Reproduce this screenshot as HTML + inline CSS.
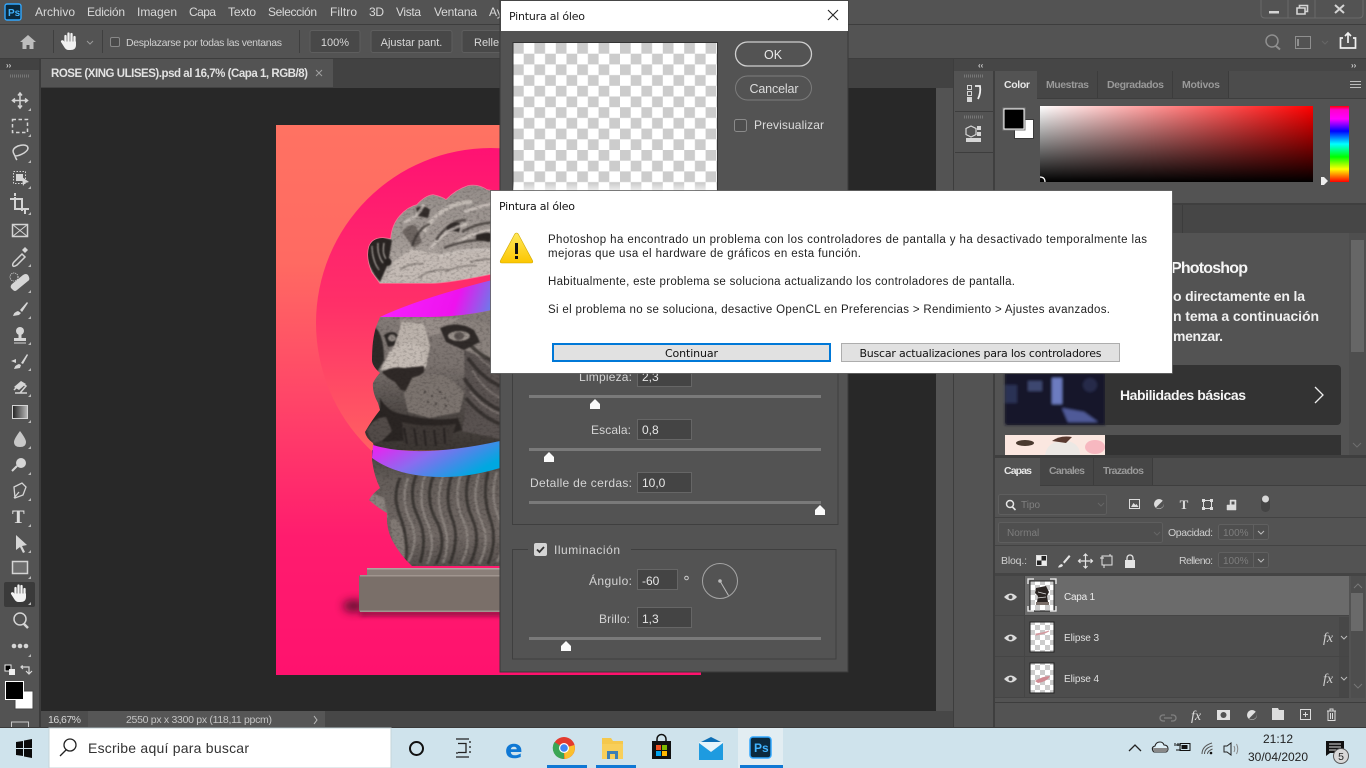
<!DOCTYPE html>
<html><head><meta charset="utf-8"><title>Photoshop</title>
<style>
html,body{margin:0;padding:0;width:1366px;height:768px;overflow:hidden;background:#535353}
svg{display:block;position:absolute;left:0;top:0}
text{font-family:"Liberation Sans",sans-serif;white-space:pre}
.d{font-family:"DejaVu Sans",sans-serif}
</style></head><body>
<svg width="1366" height="768" viewBox="0 0 1366 768" xmlns="http://www.w3.org/2000/svg">
<defs>
<pattern id="ck" width="21.4" height="21.4" patternUnits="userSpaceOnUse" x="513" y="43"><rect width="21.4" height="21.4" fill="#fff"/><rect width="10.7" height="10.7" fill="#ccc"/><rect x="10.7" y="10.7" width="10.7" height="10.7" fill="#ccc"/></pattern>
<pattern id="cs" width="10" height="10" patternUnits="userSpaceOnUse"><rect width="10" height="10" fill="#fff"/><rect width="5" height="5" fill="#ccc"/><rect x="5" y="5" width="5" height="5" fill="#ccc"/></pattern>
<linearGradient id="bg" x1="0" y1="0" x2="0" y2="1"><stop offset="0" stop-color="#ff7262"/><stop offset=".25" stop-color="#ff6a62"/><stop offset=".5" stop-color="#ff4568"/><stop offset=".75" stop-color="#ff1c6e"/><stop offset="1" stop-color="#ff126e"/></linearGradient>
<linearGradient id="circ" x1="0" y1="0" x2="0" y2="1"><stop offset="0" stop-color="#ff1273"/><stop offset=".45" stop-color="#ff3068"/><stop offset="1" stop-color="#ff7060"/></linearGradient>
<linearGradient id="rib1" gradientUnits="userSpaceOnUse" x1="400" y1="285" x2="500" y2="320"><stop offset="0" stop-color="#f51ffb"/><stop offset=".55" stop-color="#ee12ee"/><stop offset="1" stop-color="#3f9fe8"/></linearGradient>
<linearGradient id="rib2" x1="0" y1="0" x2="1" y2=".5"><stop offset="0" stop-color="#ff12f0"/><stop offset=".5" stop-color="#8a6cf0"/><stop offset="1" stop-color="#00a8e0"/></linearGradient>
<linearGradient id="top" x1="0" y1="0" x2="0" y2="1"><stop offset="0" stop-color="#938c88"/><stop offset=".6" stop-color="#a39b96"/><stop offset="1" stop-color="#c2bab4"/></linearGradient>
<linearGradient id="head" x1="0" y1="0" x2="0" y2="1"><stop offset="0" stop-color="#857d79"/><stop offset=".4" stop-color="#7a726e"/><stop offset=".7" stop-color="#4f4946"/><stop offset="1" stop-color="#38332f"/></linearGradient>
<linearGradient id="mane" x1="0" y1="0" x2="0" y2="1"><stop offset="0" stop-color="#46413e"/><stop offset=".25" stop-color="#645d59"/><stop offset=".7" stop-color="#706864"/><stop offset="1" stop-color="#524c49"/></linearGradient>
<linearGradient id="sv" x1="0" y1="0" x2="1" y2="0"><stop offset="0" stop-color="#fff"/><stop offset="1" stop-color="#f00"/></linearGradient>
<linearGradient id="sk" x1="0" y1="0" x2="0" y2="1"><stop offset="0" stop-color="#000" stop-opacity="0"/><stop offset="1" stop-color="#000"/></linearGradient>
<linearGradient id="hue" x1="0" y1="0" x2="0" y2="1"><stop offset="0" stop-color="#f00"/><stop offset=".05" stop-color="#f0c"/><stop offset=".17" stop-color="#f0f"/><stop offset=".33" stop-color="#00f"/><stop offset=".5" stop-color="#0ff"/><stop offset=".67" stop-color="#0f0"/><stop offset=".83" stop-color="#ff0"/><stop offset="1" stop-color="#f00"/></linearGradient>
<linearGradient id="gt" x1="0" y1="0" x2="1" y2="0"><stop offset="0" stop-color="#222"/><stop offset="1" stop-color="#bbb"/></linearGradient>
<linearGradient id="fade" x1="0" y1="0" x2="0" y2="1"><stop offset="0" stop-color="#fff" stop-opacity="0"/><stop offset="1" stop-color="#fff" stop-opacity=".7"/></linearGradient>
<linearGradient id="warn" x1="0" y1="0" x2="0" y2="1"><stop offset="0" stop-color="#ffe85a"/><stop offset="1" stop-color="#fcc600"/></linearGradient>
<filter id="bl4" filterUnits="userSpaceOnUse" x="270" y="560" width="300" height="100"><feGaussianBlur stdDeviation="4.500"/></filter>
<filter id="bl2" filterUnits="userSpaceOnUse" x="340" y="590" width="240" height="50"><feGaussianBlur stdDeviation="2.500"/></filter>
<filter id="soft" filterUnits="userSpaceOnUse" x="990" y="360" width="130" height="100"><feGaussianBlur stdDeviation="1.200"/></filter>
<filter id="tex" filterUnits="userSpaceOnUse" x="340" y="170" width="180" height="420" color-interpolation-filters="sRGB">
<feGaussianBlur in="SourceGraphic" stdDeviation=".9" result="b"/>
<feTurbulence type="fractalNoise" baseFrequency=".3 .45" numOctaves="2" seed="4" result="n"/>
<feColorMatrix in="n" type="matrix" values="0 0 0 0 .1  0 0 0 0 .08  0 0 0 0 .08  .55 0 0 0 -.25" result="d"/>
<feComposite in="d" in2="SourceAlpha" operator="in" result="dd"/>
<feMerge><feMergeNode in="b"/><feMergeNode in="dd"/></feMerge>
</filter>
<clipPath id="topClip"><path d="M380 283L372 272Q366 258 369 247Q372 238 383 238L391 239Q392 225 400 216Q408 207 417 205Q425 196 433 195Q442 197 446 200Q456 190 468 186Q478 184 487 190L500 192V272Q450 283 430 283Z"/></clipPath>
<clipPath id="headClip"><path id="headOutline" d="M380 317L430 317Q470 316 500 308V450H375L373 443Q366 438 365 432Q372 420 380 410L378 403Q372 392 373 383Q376 377 380 373Q372 366 372 360Q372 340 376 327Z"/></clipPath>
<clipPath id="maneClip"><path d="M372 460Q374 476 380 488Q372 494 369 500Q378 508 387 513Q386 528 392 540Q400 555 412 566H505V450H372Z"/></clipPath>
<g id="hand"><path d="M-4.500 0v-6M-1.500 0v-8.500M1.500 0v-8M4.500 1v-6" fill="none" stroke="currentColor" stroke-width="2.300" stroke-linecap="round"/><path d="M-6 -.5h12v3.500q0 5-5.500 5h-2q-2.500 0-4-2.500l-3.500-5.500q-.5-1.500 1-1.800 1-.2 2 .8z" fill="currentColor"/></g>
</defs>

<!-- chrome -->
<rect width="1366" height="768" fill="#535353"/>
<rect y="24" width="1366" height="1" fill="#3d3d3d"/>
<rect y="58" width="1366" height="1" fill="#3d3d3d"/>

<!-- menu -->
<g font-size="12" fill="#d9d9d9">
<rect x="5" y="4" width="16" height="16" rx="2" fill="#0b2a3e" stroke="#31a8ff" stroke-width="1.400"/>
<text x="8" y="16" font-size="10" fill="#41b4ff" font-weight="bold">Ps</text>
<text x="35" y="16" textLength="40">Archivo</text><text x="87" y="16" textLength="38">Edición</text><text x="137" y="16" textLength="40">Imagen</text><text x="189" y="16" textLength="27">Capa</text><text x="228" y="16" textLength="28">Texto</text><text x="268" y="16" textLength="49">Selección</text><text x="330" y="16" textLength="27">Filtro</text><text x="369" y="16" textLength="15">3D</text><text x="396" y="16" textLength="25">Vista</text><text x="434" y="16" textLength="43">Ventana</text><text x="489" y="16">Ay</text>
</g>
<!-- window buttons -->
<path d="M1261 0v14q0 4 4 4h94q4 0 4-4V0M1288 0v18M1315 0v18" fill="none" stroke="#6a6a6a"/>
<rect x="1269" y="11" width="10" height="2.500" fill="#d4d4d4"/>
<path d="M1297 8h8v6h-8zM1299.500 8V5.500h8v6h-2.500" fill="none" stroke="#d4d4d4" stroke-width="1.600"/>
<path d="M1335 5l9 8M1344 5l-9 8" stroke="#d4d4d4" stroke-width="2"/>

<!-- options bar -->
<path d="M28 35l-8 7h2.500v7h4v-4h3v4h4v-7H36z" fill="#bdbdbd"/>
<rect x="53" y="30" width="1" height="23" fill="#3f3f3f"/><rect x="102" y="30" width="1" height="23" fill="#3f3f3f"/><rect x="299" y="30" width="1" height="23" fill="#3f3f3f"/>
<use href="#hand" x="70" y="42" color="#f0f0f0"/>
<path d="M87 41l3 3 3-3" fill="none" stroke="#9a9a9a"/>
<rect x="110.500" y="37.500" width="9" height="9" rx="1.500" fill="#4a4a4a" stroke="#888"/>
<text x="126" y="46" font-size="10.500" fill="#d0d0d0" textLength="156">Desplazarse por todas las ventanas</text>
<rect x="310" y="30.500" width="50" height="22" rx="2" fill="#484848" stroke="#5e5e5e"/>
<text x="335" y="46" font-size="11" fill="#d8d8d8" text-anchor="middle">100%</text>
<rect x="371" y="30.500" width="81" height="22" rx="2" fill="#484848" stroke="#5e5e5e"/>
<text x="411.500" y="46" font-size="11" fill="#d8d8d8" text-anchor="middle">Ajustar pant.</text>
<rect x="462" y="30.500" width="60" height="22" rx="2" fill="#484848" stroke="#5e5e5e"/>
<text x="474" y="46" font-size="11" fill="#d8d8d8">Rellen</text>
<circle cx="1272" cy="41" r="6" fill="none" stroke="#8f8f8f" stroke-width="1.500"/><path d="M1276 46l4 3.500" stroke="#8f8f8f" stroke-width="2"/>
<rect x="1295.500" y="36.500" width="15" height="12" fill="none" stroke="#8f8f8f"/><path d="M1298 39v7" stroke="#8f8f8f" stroke-width="2"/>
<path d="M1322 41l3 3 3-3" fill="none" stroke="#666"/>
<path d="M1343 38h-2.500v10h15V38H1353M1348 43V33M1345 36l3-3 3 3" fill="none" stroke="#f0f0f0" stroke-width="1.700"/>

<!-- tab strip -->
<rect x="41" y="59" width="913" height="29" fill="#424242"/>
<rect x="41" y="59" width="292" height="28" fill="#535353"/>
<text x="51" y="77" font-size="11.500" fill="#e2e2e2" font-weight="bold" textLength="257">ROSE (XING ULISES).psd al 16,7% (Capa 1, RGB/8)</text>
<path d="M316 70l6 6M322 70l-6 6" stroke="#a0a0a0"/>

<!-- left tool strip -->
<rect x="0" y="59" width="39" height="11" fill="#424242"/>
<rect x="39" y="59" width="2" height="670" fill="#3c3c3c"/>
<text x="6" y="68" font-size="8" fill="#d0d0d0" font-weight="bold">››</text>
<path d="M10 76h19" stroke="#777" stroke-width="3" stroke-dasharray="1 1"/>

<!-- canvas -->
<rect x="41" y="88" width="896" height="623" fill="#282828"/>
<rect x="936" y="88" width="18" height="623" fill="#535353"/>
<rect x="953" y="59" width="1" height="670" fill="#3d3d3d"/>

<!-- artwork -->
<rect x="276" y="125" width="425" height="550" fill="url(#bg)"/>
<circle cx="491" cy="323" r="175" fill="url(#circ)"/>
<ellipse cx="354" cy="606" rx="11" ry="6" fill="#3a1020" opacity=".8" filter="url(#bl4)"/>
<rect x="360" y="611" width="200" height="5" fill="#8d1040" filter="url(#bl2)"/>
<!-- base -->
<path d="M367 568h140v8H367z" fill="#8a7f79"/>
<rect x="367" y="568" width="140" height="1.500" fill="#b0a59f"/>
<path d="M361 575h146v37H361q-2 0-2-2v-33q0-2 2-2z" fill="#7a6f69"/>
<rect x="360" y="575" width="147" height="1.500" fill="#a0958f"/>
<rect x="360" y="610.500" width="147" height="1.500" fill="#a0958f"/>
<!-- mane -->
<g clip-path="url(#maneClip)"><g filter="url(#tex)">
<rect x="360" y="450" width="150" height="120" fill="url(#mane)"/>
<path d="M366 490l18 8 4 20-14 0z" fill="#8a827d"/>
<path d="M390 520q12-8 18 40l-14-8z" fill="#817974"/>
<g fill="none" stroke="#2a2624" stroke-width="3" opacity=".7">
<path d="M400 478q-8 18 0 38t6 45M416 475q-8 22 2 42t2 46M434 474q-10 24 2 46t0 44M452 474q-8 24 0 44t-2 46M470 472q-8 24 2 46t-2 46M488 472q-6 24 2 46t-2 46"/>
</g>
<g fill="none" stroke="#a39b95" stroke-width="2.500" opacity=".55">
<path d="M408 478q-8 22 2 42t-2 42M425 476q-8 24 2 46t0 42M443 475q-8 24 0 46t0 42M461 474q-8 24 2 46t-2 44M479 474q-8 24 2 46t-2 44M497 472q-8 24 2 46t-2 44"/>
</g>
</g></g>
<!-- head -->
<g clip-path="url(#headClip)"><g filter="url(#tex)">
<rect x="360" y="305" width="145" height="150" fill="url(#head)"/>
<path d="M372 325q12 6 12 35l-8 14-6-6z" fill="#2e2a28"/>
<path d="M400 318h60l-15 14-24 6-8 20-13-8z" fill="#978e89"/>
<path d="M445 325q22-8 42-2l13 16v24l-22-6-26-16z" fill="#8a827d"/>
<path d="M440 328q18-8 34 2l6 12-16 8-18-8z" fill="#2f2a28"/>
<ellipse cx="459" cy="336" rx="11" ry="5" fill="#9a928c"/><ellipse cx="459" cy="336" rx="5" ry="4" fill="#5a5350"/>
<path d="M384 335q8-6 14 0l-2 10-8 2z" fill="#2b2725"/><ellipse cx="392" cy="338" rx="4" ry="3.500" fill="#8e8681"/>
<path d="M402 322l22 2 6 22-4 22-20 4-26-2q4-8 14-24z" fill="#bbb2ab"/>
<path d="M389 352l20-10 14 6 2 20-20 3-22-1z" fill="#c4bbb4"/>
<path d="M382 372q10-6 22-4l20-2 0 6-10 8-4 12-9-2-6-8q-8-4-13-10z" fill="#2f2927"/>
<path d="M412 378q18-8 38 0l14 14-4 20-30 6-22-6-4-18z" fill="#7b736e"/>
<g fill="#3a3432"><circle cx="425" cy="392" r="1"/><circle cx="432" cy="396" r="1"/><circle cx="440" cy="392" r="1"/><circle cx="445" cy="398" r="1"/><circle cx="428" cy="402" r="1"/><circle cx="436" cy="404" r="1"/><circle cx="446" cy="406" r="1"/></g>
<path d="M464 350l36 14v75l-38-8 4-25z" fill="#595250"/>
<path d="M468 358q14 20 32 28M464 378q14 22 36 32M470 345q14 14 30 18M466 398q14 18 34 26" fill="none" stroke="#2c2826" stroke-width="3.500" opacity=".75"/>
<path d="M474 352q12 14 26 20M472 370q12 20 28 28M470 392q14 16 30 22" fill="none" stroke="#8f8782" stroke-width="2" opacity=".6"/>
<path d="M380 398q8 14 22 16 30 8 56 4l4 12-30 10-60 2-8-12 16-22z" fill="#2a2523"/>
<path d="M402 422q22 6 54 2l-6 20h-46z" fill="#3e3835"/>
<path d="M366 431q8-14 20-14l6 14-10 10-9 2z" fill="#524b48"/>
<path d="M404 428l3 16M414 428l3 18M424 430l2 16M434 430l2 16M444 428l1 16" stroke="#1f1b1a" stroke-width="2" opacity=".7"/>
</g></g>
<!-- ribbons -->
<path d="M380 317Q420 298 500 278V308Q470 316 430 317Z" fill="url(#rib1)"/>
<path d="M373 445q45 14 127-4v27q-30 9-57 9-45 0-71-19z" fill="url(#rib2)"/>
<!-- top of head -->
<path d="M380 283L372 272Q366 258 369 247Q372 238 383 238L391 239Q392 225 400 216Q408 207 417 205Q425 196 433 195Q442 197 446 200Q456 190 468 186Q478 184 487 190L500 192V272Q450 283 430 283Z" fill="none" stroke="#f0c8c0" stroke-width="1.500" opacity=".5"/>
<g clip-path="url(#topClip)"><g filter="url(#tex)">
<rect x="360" y="180" width="145" height="110" fill="url(#top)"/>
<path d="M366 240q-2 24 14 42l8-18 4-24-12-4z" fill="#2a2523"/>
<path d="M372 246q0 14 7 24M378 243q-1 12 5 20M384 243q-2 10 2 16" stroke="#a39c97" stroke-width="1.300" fill="none"/>
<ellipse cx="388" cy="262" rx="3.500" ry="4" fill="#26211f"/>
<path d="M386 283l8-22 18-12 30 6 58-6v32h-110z" fill="#c4bbb5"/>
<path d="M400 270q10-8 24-6M418 278q14-10 30-8M445 272q16-8 32-6M470 262q14-4 30-2" fill="none" stroke="#857d78" stroke-width="1.800" opacity=".8"/>
<path d="M416 208q8-4 14 2l-2 8-10-2z" fill="#332d2b"/>
<path d="M402 232q8-10 14-6l6 16-8 6z" fill="#6d6561"/>
<path d="M447 226q8-6 14-2l-2 8-12-2z" fill="#2f2a28"/>
<path d="M476 234q8-4 16 0l-2 8-14-2z" fill="#2b2624"/>
<path d="M424 232q10-18 28-26 10-4 20-4" fill="none" stroke="#d0c8c2" stroke-width="4" opacity=".75"/>
<path d="M404 222q14-4 20-18M430 250q14-22 38-26M456 244q18-14 44-14M440 256q26-8 60-6M464 212q16-6 36-10" fill="none" stroke="#d4ccc6" stroke-width="3" opacity=".7"/>
<path d="M412 246q6-18 18-22M436 240q14-20 30-20M462 232q16-10 38-10M444 248q24-10 56-8" fill="none" stroke="#332e2b" stroke-width="2.500" opacity=".7"/>
</g></g>

<!-- status bar -->
<rect x="41" y="711" width="912" height="17" fill="#474747"/>
<rect x="88" y="711" width="237" height="17" fill="#565656"/>
<rect x="41" y="711" width="47" height="17" fill="#4d4d4d"/>
<text x="48" y="723" font-size="10.500" fill="#d8d8d8" textLength="33">16,67%</text>
<text x="126" y="723" font-size="10.500" fill="#c4c4c4" textLength="146">2550 px x 3300 px (118,11 ppcm)</text>
<path d="M314 716l3 4-3 4" fill="none" stroke="#bbb"/>

<!-- tools -->
<g fill="none" stroke="#d4d4d4" stroke-width="1.500">
<path d="M20 93v15M12.500 100.500h15M18 95.500l2-2.500 2 2.500M18 105.500l2 2.500 2-2.500M15 98.500l-2.500 2 2.500 2M25 98.500l2.500 2-2.500 2"/>
<rect x="12.500" y="119.500" width="15" height="13" stroke-dasharray="3.500 2.500"/>
<path d="M14 154q-3-5 4-8 6-2 9 0 3 3-3 7-5 3-9 3zM15 156q1 3 2 4"/>
<rect x="13.500" y="171.500" width="12" height="12" stroke-dasharray="1.500 1.500" stroke-width="1"/>
<path d="M15 197v12h10v5M10 199h12v12M15 193v3M29 209h-3" stroke-width="2"/>
<rect x="12.500" y="224.500" width="15" height="12"/><path d="M12.500 224.500l15 12M27.500 224.500l-15 12" stroke-width="1"/>
<path d="M14 262l8-8 3 3-8 8q-3 2-4 1-1-2 1-4z"/>
<path d="M15 393h12M14 390l7-7 5 3-6 7" />
<circle cx="20" cy="619" r="6"/><path d="M24 624l4 4" stroke-width="2.500"/>
<path d="M14 487l8-4 4 4-3 8-8 3zM14 498l5-6" stroke-width="1.300"/>
<rect x="12.500" y="561.500" width="15" height="12" fill="#6e6e6e"/>
</g>
<g fill="#d6d6d6">
<rect x="16" y="174" width="7" height="7"/><path d="M22 177l7 5-4 1-2 3z"/>
<path d="M22 250l3-3 3 3-3 3z"/>
<path d="M12 284l11-9q3-2 5 0l1 2q1 3-1 4l-11 9q-2 2-4 0l-2-2q-1-2 1-4z"/><circle cx="14" cy="277" r="4" fill="none" stroke="#d6d6d6" stroke-dasharray="1 1"/>
<path d="M27 302l-7 8 2 2 6-9zM18 311q-4 1-5 5l6-1 2-2z"/>
<circle cx="20" cy="331" r="4"/><rect x="18.500" y="333" width="3" height="5"/><rect x="14" y="338" width="12" height="3"/><rect x="14" y="342.500" width="12" height="1"/>
<path d="M27 354l-6 9 2 1 5-9zM19 364q-4 1-5 5l6-1 1-3z"/><path d="M11 361l5-2v4z"/>
<path d="M14 387l7-6 5 3-7 6z"/>
<path d="M20 431q-6 8-6 11 0 5 6 5t6-5q0-3-6-11z" fill="#c8c8c8"/>
<circle cx="21" cy="463" r="5"/><path d="M17 466l-5 5" stroke="#d6d6d6" stroke-width="2"/>
<text x="12" y="523" font-size="19" font-weight="bold" fill="#dcdcdc" style="font-family:'Liberation Serif',serif">T</text>
<path d="M16 535l11 10-5 1 3 6-2 1-3-6-4 3z"/>
<circle cx="14" cy="646" r="2.300"/><circle cx="20" cy="646" r="2.300"/><circle cx="26" cy="646" r="2.300"/>
</g>
<rect x="12.500" y="405.500" width="15" height="13" fill="url(#gt)" stroke="#d4d4d4"/>
<rect x="4" y="582" width="31" height="25" rx="2" fill="#3a3a3a"/>
<use href="#hand" x="20" y="594" color="#f2f2f2"/>
<g fill="#b8b8b8"><path d="M31 108l-3 3h3zM31 134l-3 3h3zM31 160l-3 3h3zM31 186l-3 3h3zM31 212l-3 3h3zM31 264l-3 3h3zM31 290l-3 3h3zM31 316l-3 3h3zM31 342l-3 3h3zM31 368l-3 3h3zM31 394l-3 3h3zM31 420l-3 3h3zM31 446l-3 3h3zM31 472l-3 3h3zM31 498l-3 3h3zM31 524l-3 3h3zM31 550l-3 3h3zM31 576l-3 3h3zM31 602l-3 3h3zM31 654l-3 3h3z"/></g>
<rect x="5" y="665" width="6" height="6" fill="#000" stroke="#eee"/><rect x="9" y="669" width="6" height="6" fill="#eee"/>
<path d="M23 666h-1l-1 1 2 2M22 667h7v6M26 671l3 3 3-3" fill="none" stroke="#d8d8d8" stroke-width="1.200"/>
<rect x="15" y="691" width="18" height="18" fill="#fff" stroke="#444"/>
<rect x="5.500" y="681.500" width="18" height="18" fill="#000" stroke="#fff"/>
<rect x="11.500" y="722" width="17" height="6" fill="none" stroke="#c8c8c8"/>

<!-- right collapsed panel -->
<rect x="954" y="59" width="412" height="12" fill="#464646"/>
<text x="978" y="68" font-size="8" fill="#d0d0d0" font-weight="bold">‹‹</text>
<text x="1351" y="68" font-size="8" fill="#d0d0d0" font-weight="bold">››</text>
<rect x="993" y="71" width="2" height="658" fill="#3f3f3f"/>
<rect x="955" y="111" width="38" height="1" fill="#3d3d3d"/><rect x="955" y="152" width="38" height="1" fill="#3d3d3d"/>
<path d="M964 76h19M964 117h19" stroke="#777" stroke-width="3" stroke-dasharray="1 1"/>
<g fill="none" stroke="#d6d6d6"><rect x="967.500" y="85.500" width="4" height="4"/><rect x="967.500" y="91.500" width="4" height="4"/></g>
<rect x="967" y="97" width="5" height="5" fill="#d6d6d6"/>
<path d="M975 86h5q1 7-2 13" fill="none" stroke="#f0f0f0" stroke-width="1.800"/>
<path d="M971 126l5 2.500v6l-5 2.500-5-2.500v-6z" fill="none" stroke="#d6d6d6" stroke-width="1.200"/>
<rect x="977" y="126" width="4" height="4" fill="#d6d6d6"/><rect x="977" y="132" width="4" height="4" fill="#d6d6d6"/>
<rect x="966" y="138" width="15" height="4" fill="#d6d6d6"/>

<!-- color panel -->
<rect x="995" y="71" width="371" height="27" fill="#4c4c4c"/>
<rect x="1037" y="71" width="191" height="27" fill="#464646"/>
<rect x="995" y="71" width="42" height="28" fill="#535353"/>
<rect x="1037" y="98" width="329" height="1" fill="#3e3e3e"/>
<path d="M1097.500 71v27M1172.500 71v27M1228.500 71v27" stroke="#3c3c3c"/>
<text x="1004" y="88" font-size="10.500" fill="#e6e6e6" font-weight="bold" textLength="26">Color</text>
<text x="1046" y="88" font-size="10.500" fill="#999" font-weight="bold" textLength="43">Muestras</text>
<text x="1107" y="88" font-size="10.500" fill="#999" font-weight="bold" textLength="57">Degradados</text>
<text x="1182" y="88" font-size="10.500" fill="#999" font-weight="bold" textLength="38">Motivos</text>
<path d="M1350 81.500h11M1350 84.500h11M1350 87.500h11M1350 215h11M1350 218h11M1350 221h11M1350 470h11M1350 473h11M1350 476h11" stroke="#bcbcbc"/>
<rect x="1014.500" y="119.500" width="19" height="19" fill="#fff" stroke="#3a3a3a"/>
<rect x="1004" y="109" width="20" height="20" fill="#000" stroke="#fff" stroke-width="1"/>
<rect x="1003" y="108" width="22" height="22" fill="none" stroke="#7a7a7a"/>
<rect x="1040" y="106" width="273" height="76" fill="url(#sv)"/><rect x="1040" y="106" width="273" height="76" fill="url(#sk)"/>
<path d="M1040 177q5 0 5 5" fill="none" stroke="#fff" stroke-width="1.200"/>
<rect x="1330" y="106" width="19" height="76" fill="url(#hue)"/>
<path d="M1321 177h3l4 4-4 4h-3z" fill="#eee"/>
<rect x="995" y="203" width="371" height="2" fill="#3f3f3f"/>

<!-- learn panel -->
<rect x="995" y="205" width="371" height="28" fill="#464646"/>
<rect x="1182" y="205" width="1" height="28" fill="#3c3c3c"/>
<rect x="995" y="233" width="371" height="222" fill="#535353"/>
<rect x="1349" y="233" width="17" height="222" fill="#4e4e4e"/>
<rect x="1351" y="240" width="13" height="112" fill="#666"/>
<path d="M1353 443l4 4 4-4" fill="none" stroke="#6e6e6e"/>
<text x="1171" y="273" font-size="16" fill="#f5f5f5" font-weight="bold" textLength="77">Photoshop</text>
<text x="1173" y="301" font-size="14" fill="#f0f0f0" font-weight="bold" textLength="132">o directamente en la</text>
<text x="1173" y="321" font-size="14" fill="#f0f0f0" font-weight="bold" textLength="146">n tema a continuación</text>
<text x="1173" y="341" font-size="14" fill="#f0f0f0" font-weight="bold" textLength="50">menzar.</text>
<rect x="1005" y="365" width="336" height="60" rx="4" fill="#333"/>
<g filter="url(#soft)">
<rect x="1005" y="373" width="100" height="52" fill="#15182c"/>
<rect x="1028" y="381" width="14" height="10" fill="#3d4670"/><rect x="1052" y="378" width="10" height="26" fill="#6c7bc0"/>
<path d="M1062 408l22 4 14 10h-30z" fill="#4f5a98"/><rect x="1005" y="385" width="12" height="18" fill="#2c3054"/><circle cx="1090" cy="385" r="7" fill="#262a4a"/>
</g>
<rect x="1105" y="365" width="6" height="60" fill="#333"/>
<text x="1120" y="400" font-size="14" fill="#f5f5f5" font-weight="bold" textLength="126">Habilidades básicas</text>
<path d="M1315 387l8 8-8 8" fill="none" stroke="#eee" stroke-width="1.300"/>
<rect x="1005" y="435" width="336" height="20" fill="#333"/>
<rect x="1005" y="435" width="100" height="20" fill="#fbe7e0"/>
<path d="M1045 455q2-12 15-14l8 0q12 3 12 14z" fill="#ece8e4"/><path d="M1052 441q8-6 20-4l-6 6z" fill="#5a3a30"/><ellipse cx="1025" cy="443" rx="9" ry="3" fill="#4a3a30"/><ellipse cx="1095" cy="447" rx="10" ry="7" fill="#f7b8c0"/>
<rect x="995" y="455" width="371" height="3" fill="#3f3f3f"/>

<!-- layers panel -->
<rect x="995" y="458" width="371" height="27" fill="#4c4c4c"/>
<rect x="1040" y="458" width="112" height="27" fill="#464646"/>
<rect x="995" y="458" width="45" height="28" fill="#535353"/>
<rect x="1040" y="485" width="326" height="1" fill="#3e3e3e"/>
<path d="M1093.500 458v27M1152.500 458v27" stroke="#3c3c3c"/>
<text x="1004" y="474" font-size="10.500" fill="#e6e6e6" font-weight="bold" textLength="28">Capas</text>
<text x="1049" y="474" font-size="10.500" fill="#999" font-weight="bold" textLength="36">Canales</text>
<text x="1103" y="474" font-size="10.500" fill="#999" font-weight="bold" textLength="41">Trazados</text>
<rect x="998.500" y="494.500" width="108" height="20" rx="2" fill="#4f4f4f" stroke="#5e5e5e"/>
<circle cx="1010" cy="504" r="3.500" fill="none" stroke="#e6e6e6" stroke-width="1.500"/><path d="M1012.500 507l3 3" stroke="#e6e6e6" stroke-width="1.600"/>
<text x="1021" y="508" font-size="10" fill="#808080">Tipo</text>
<path d="M1098 503l3 3 3-3" fill="none" stroke="#666"/>
<rect x="1129.500" y="499.500" width="10" height="9" fill="none" stroke="#dcdcdc"/><path d="M1131 507l2.500-4 2 2 1-1 2 3z" fill="#dcdcdc"/>
<circle cx="1159" cy="504" r="5" fill="#dcdcdc"/><path d="M1163 500.500a5 5 0 0 1-7 7z" fill="#535353"/>
<text x="1184" y="509" font-size="13" fill="#dcdcdc" font-weight="bold" text-anchor="middle" style="font-family:'Liberation Serif',serif">T</text>
<rect x="1203.500" y="500.500" width="8" height="8" fill="none" stroke="#dcdcdc"/>
<rect x="1202" y="499" width="3" height="3" fill="#dcdcdc"/><rect x="1210" y="499" width="3" height="3" fill="#dcdcdc"/><rect x="1202" y="507" width="3" height="3" fill="#dcdcdc"/><rect x="1210" y="507" width="3" height="3" fill="#dcdcdc"/>
<path d="M1230 500h6v10h-9v-5h3z" fill="#dcdcdc" stroke="#dcdcdc" stroke-width=".5"/><rect x="1231.500" y="501.500" width="3" height="3" fill="#535353"/>
<rect x="1261" y="497" width="9" height="15" rx="4.500" fill="#444"/><circle cx="1265.500" cy="499" r="3.500" fill="#d8d8d8"/>
<rect x="995" y="517" width="371" height="1" fill="#434343"/>
<rect x="998.500" y="522.500" width="164" height="20" rx="2" fill="#4f4f4f" stroke="#5e5e5e"/>
<text x="1007" y="536" font-size="10" fill="#7d7d7d">Normal</text>
<path d="M1154 532l3 3 3-3" fill="none" stroke="#666"/>
<text x="1168" y="536" font-size="10.500" fill="#cfcfcf" textLength="45">Opacidad:</text>
<rect x="1218.500" y="524.500" width="50" height="15" rx="2" fill="#4f4f4f" stroke="#606060"/><path d="M1253.500 525v14" stroke="#606060"/>
<text x="1223" y="536" font-size="10" fill="#7d7d7d">100%</text>
<path d="M1258 531l3 3 3-3" fill="none" stroke="#bbb"/>
<rect x="995" y="545" width="371" height="1" fill="#434343"/>
<text x="1001" y="564" font-size="10.500" fill="#cfcfcf" textLength="26">Bloq.:</text>
<rect x="1036.500" y="555.500" width="10" height="10" fill="#222" stroke="#ddd"/><rect x="1037" y="556" width="4.500" height="4.500" fill="#eee"/><rect x="1041.500" y="560.500" width="4.500" height="4.500" fill="#eee"/>
<path d="M1069 555l-6 7 1.500 1.500 6-7zM1062 564q-3 .5-4 3.500 4 0 5-2z" fill="#e4e4e4"/>
<path d="M1085.500 554v14M1078.500 561h14M1083.500 556l2-2 2 2M1083.500 566l2 2 2-2M1080.500 559l-2 2 2 2M1090.500 559l2 2-2 2" fill="none" stroke="#e4e4e4" stroke-width="1.200"/>
<path d="M1102 556h10v9h-10zM1100 558h4M1110 556v-2M1104 568v-3" fill="none" stroke="#e4e4e4"/>
<rect x="1125" y="560" width="10" height="8" fill="#e4e4e4"/><path d="M1127 560v-2a3 3 0 0 1 6 0v2" fill="none" stroke="#e4e4e4" stroke-width="1.300"/>
<text x="1179" y="564" font-size="10.500" fill="#cfcfcf" textLength="34">Relleno:</text>
<rect x="1218.500" y="552.500" width="50" height="15" rx="2" fill="#4f4f4f" stroke="#606060"/><path d="M1253.500 553v14" stroke="#606060"/>
<text x="1223" y="564" font-size="10" fill="#7d7d7d">100%</text>
<path d="M1258 559l3 3 3-3" fill="none" stroke="#bbb"/>
<rect x="995" y="573" width="371" height="3" fill="#444"/>
<rect x="995" y="576" width="354" height="122" fill="#4d4d4d"/>
<rect x="1025" y="576" width="324" height="39" fill="#6b6b6b"/>
<rect x="1339" y="617" width="10" height="81" fill="#474747"/>
<path d="M995 615.500h354M995 656.500h354M995 697.500h354M1024.500 576v122" stroke="#454545"/>
<g fill="#dcdcdc">
<path d="M1004 597q7-7 13 0-6 7-13 0zM1004 638q7-7 13 0-6 7-13 0zM1004 679q7-7 13 0-6 7-13 0z"/>
</g>
<circle cx="1010.500" cy="597" r="2" fill="#4d4d4d"/><circle cx="1010.500" cy="638" r="2" fill="#4d4d4d"/><circle cx="1010.500" cy="679" r="2" fill="#4d4d4d"/>
<rect x="1030" y="581" width="24" height="30" fill="url(#cs)" stroke="#222"/>
<path d="M1036 588l10-2 3 6-2 4 1 6-11 0 1-6-3-3z" fill="#2a2422"/><path d="M1038 592l8 2M1037 598l9-1" stroke="#ddd" stroke-width=".8"/><rect x="1036" y="602" width="13" height="3" fill="#7a6f69"/>
<path d="M1028 584v-5h6M1050 579h6v5M1028 606v5h6M1050 611h6v-5" fill="none" stroke="#f2f2f2" stroke-width="1.300"/>
<rect x="1030" y="622" width="24" height="30" fill="url(#cs)" stroke="#222"/>
<path d="M1036 634q8-1 13-3-5 3-13 4z" fill="#d39aa0" stroke="#d39aa0"/>
<rect x="1030" y="663" width="24" height="30" fill="url(#cs)" stroke="#222"/>
<path d="M1035 681q8-5 15-5-2 5-12 7z" fill="#cf8a92"/>
<text x="1064" y="600" font-size="10" fill="#ececec" textLength="31">Capa 1</text>
<text x="1064" y="641" font-size="10" fill="#e0e0e0" textLength="35">Elipse 3</text>
<text x="1064" y="682" font-size="10" fill="#e0e0e0" textLength="35">Elipse 4</text>
<g font-style="italic" font-size="14" fill="#d0d0d0">
<text x="1323" y="642" style="font-family:'Liberation Serif',serif">fx</text><text x="1323" y="683" style="font-family:'Liberation Serif',serif">fx</text></g>
<path d="M1341 636l3 3 3-3M1341 677l3 3 3-3" fill="none" stroke="#bbb"/>
<rect x="1351" y="576" width="14" height="122" fill="#4e4e4e"/>
<rect x="1351" y="593" width="12" height="38" fill="#6a6a6a"/>
<path d="M1354 588l4-4 4 4M1354 684l4 4 4-4" fill="none" stroke="#777"/>
<rect x="995" y="702" width="371" height="1" fill="#3d3d3d"/>
<path d="M1165 715h-2a3 3 0 0 0 0 6h2M1171 715h2a3 3 0 0 1 0 6h-2M1164 718h8" fill="none" stroke="#808080" stroke-width="1.300"/>
<text x="1191" y="720" font-size="14" fill="#dcdcdc" font-style="italic" style="font-family:'Liberation Serif',serif">fx</text>
<rect x="1217" y="710" width="13" height="10" fill="#e0e0e0"/><circle cx="1223.500" cy="715" r="3" fill="#535353"/>
<circle cx="1252" cy="715" r="5" fill="#e0e0e0"/><path d="M1256 711.500a5 5 0 0 1-7 7z" fill="#535353"/>
<path d="M1272 708h6l1 2h5v10h-12z" fill="#dcdcdc"/>
<rect x="1300.500" y="709.500" width="10" height="10" fill="none" stroke="#dcdcdc"/><path d="M1305.500 712v5M1303 714.500h5" stroke="#dcdcdc"/>
<path d="M1327 711h9M1330 711v-2h3v2M1328 711.500v9h7v-9M1330.500 713v6M1332.500 713v6" fill="none" stroke="#dcdcdc"/>

<!-- oil paint dialog -->
<rect x="500" y="0" width="348" height="672" fill="#535353" stroke="#3a3a3a"/>
<rect x="501" y="1" width="347" height="30" fill="#fff"/>
<text x="509" y="20" font-size="11" fill="#1a1a1a" class="d" textLength="76">Pintura al óleo</text>
<path d="M828 10l10 10M838 10l-10 10" stroke="#222" stroke-width="1.100"/>
<rect x="513" y="43" width="204" height="148" fill="url(#ck)"/>
<path d="M513 191V42.500h204.500V191" fill="none" stroke="#333"/>
<rect x="513" y="183" width="204" height="8" fill="url(#fade)"/>
<rect x="735.500" y="42" width="76" height="24" rx="12" fill="#535353" stroke="#cfcfcf" stroke-width="1.300"/>
<text x="773" y="59" font-size="12.500" fill="#e8e8e8" text-anchor="middle">OK</text>
<rect x="735.500" y="76" width="76" height="24" rx="12" fill="#535353" stroke="#7c7c7c"/>
<text x="774" y="93" font-size="12.500" fill="#dcdcdc" text-anchor="middle" textLength="49">Cancelar</text>
<rect x="734.500" y="119.500" width="12" height="12" rx="2" fill="#4e4e4e" stroke="#8a8a8a"/>
<text x="754" y="129" font-size="12" fill="#dcdcdc" textLength="70">Previsualizar</text>

<g font-size="12" fill="#d4d4d4">
<path d="M512.500 373v151.500h325.500V373" fill="none" stroke="#3f3f3f"/>
<text x="579" y="381" textLength="53">Limpieza:</text>
<text x="591" y="434" textLength="40">Escala:</text>
<text x="530" y="487" textLength="102">Detalle de cerdas:</text>
<text x="589" y="585" textLength="43">Ángulo:</text>
<text x="599" y="623" textLength="31">Brillo:</text>
<text x="554" y="554" textLength="66">Iluminación</text>
</g>
<g fill="#444" stroke="#666">
<rect x="637.500" y="366.500" width="54" height="20"/><rect x="637.500" y="419.500" width="54" height="20"/><rect x="637.500" y="472.500" width="54" height="20"/><rect x="637.500" y="569.500" width="40" height="20"/><rect x="637.500" y="607.500" width="54" height="20"/>
</g>
<g font-size="12" fill="#e6e6e6">
<text x="642" y="381">2,3</text><text x="642" y="434">0,8</text><text x="642" y="487">10,0</text><text x="642" y="585">-60</text><text x="642" y="623">1,3</text>
</g>
<g fill="#7a7a7a"><rect x="529" y="395" width="292" height="3"/><rect x="529" y="448" width="292" height="3"/><rect x="529" y="501" width="292" height="3"/><rect x="529" y="637" width="292" height="3"/></g>
<g fill="#fafafa">
<path d="M595 399l5 5v5h-10v-5z"/><path d="M549 452l5 5v5h-10v-5z"/><path d="M820 505l5 5v5h-10v-5z"/><path d="M566 641l5 5v5h-10v-5z"/>
</g>
<path d="M528 549.500h-15.500v109.500h323.500V549.500H631" fill="none" stroke="#3f3f3f"/>
<rect x="534" y="543" width="13" height="13" rx="2" fill="#d4d4d4"/>
<path d="M537 549.500l2.500 2.500 4.500-5" fill="none" stroke="#333" stroke-width="1.800"/>
<circle cx="686.500" cy="578" r="1.800" fill="none" stroke="#ccc"/>
<circle cx="720" cy="581" r="17.500" fill="none" stroke="#a5a5a5"/><circle cx="720" cy="581" r="1.800" fill="#bbb"/><path d="M720 581l8.500 14.500" stroke="#bbb"/>

<!-- alert -->
<rect x="490.500" y="190.500" width="682" height="183" fill="#fff" stroke="#444" stroke-opacity=".7"/>
<text x="499" y="210" font-size="11" class="d" fill="#111" textLength="76">Pintura al óleo</text>
<path d="M516.500 233q1.200 0 2 1.500l14 26q1 2.500-1.500 2.500h-29q-2.500 0-1.500-2.500l14-26q.8-1.500 2-1.500z" fill="url(#warn)" stroke="#d0a800" stroke-width=".6"/>
<rect x="515" y="243" width="3" height="11" fill="#111"/><rect x="515" y="256" width="3" height="3" fill="#111"/>
<g font-size="11.500" class="d" fill="#222">
<text x="548" y="243" textLength="599">Photoshop ha encontrado un problema con los controladores de pantalla y ha desactivado temporalmente las</text>
<text x="548" y="257" textLength="313">mejoras que usa el hardware de gráficos en esta función.</text>
<text x="548" y="285" textLength="467">Habitualmente, este problema se soluciona actualizando los controladores de pantalla.</text>
<text x="548" y="313" textLength="562">Si el problema no se soluciona, desactive OpenCL en Preferencias &gt; Rendimiento &gt; Ajustes avanzados.</text>
</g>
<rect x="553" y="344" width="277" height="17" fill="#e1e1e1" stroke="#0078d7" stroke-width="2"/>
<text x="691.500" y="357" font-size="11" class="d" fill="#111" text-anchor="middle" textLength="53">Continuar</text>
<rect x="841.500" y="343.500" width="278" height="18" fill="#e1e1e1" stroke="#adadad"/>
<text x="980.500" y="357" font-size="11" class="d" fill="#111" text-anchor="middle" textLength="242">Buscar actualizaciones para los controladores</text>

<!-- taskbar -->
<rect y="728" width="1366" height="40" fill="#cfe3ec"/>
<rect y="727" width="1366" height="1" fill="#3a3a3a"/>
<g fill="#0a0a0a"><path d="M16 742l7-1v7h-7zM24 740.500l8-1.500v9h-8zM16 749h7v7l-7-1zM24 749h8v9l-8-1.500z"/></g>
<rect x="49" y="728" width="342" height="40" fill="#fff" stroke="#c6d4da"/>
<circle cx="70" cy="745" r="6" fill="none" stroke="#222" stroke-width="1.300"/><path d="M66 750l-6 6" stroke="#222" stroke-width="1.300"/>
<text x="88" y="753" font-size="14" fill="#333" textLength="161">Escribe aquí para buscar</text>
<circle cx="416.500" cy="748.500" r="6.500" fill="none" stroke="#111" stroke-width="2"/>
<path d="M456 739h13M456 757h13M458 743.500h8v9h-8M456 753h2M470 741v2M470 746v2M470 751v2" fill="none" stroke="#222" stroke-width="1.300"/>
<text x="505" y="758" font-size="26" font-weight="bold" fill="#0f78d4" style="font-family:'DejaVu Sans',sans-serif">e</text>
<circle cx="564" cy="748" r="11" fill="#e33b2e"/>
<path d="M564 748l10.500-3a11 11 0 0 1-10 14z" fill="#fbc02d"/><path d="M564 748l0 11a11 11 0 0 1-9.500-17z" fill="#3aa655"/>
<circle cx="564" cy="748" r="5" fill="#fff"/><circle cx="564" cy="748" r="3.800" fill="#3f86f4"/>
<path d="M602 738h9l2 3h10v5h-21z" fill="#f5c84c"/><rect x="602" y="744" width="21" height="15" fill="#f8cf5a"/><rect x="607" y="751" width="11" height="8" fill="#3d7fb5"/><rect x="610" y="754" width="5" height="5" fill="#f8cf5a"/>
<rect x="652" y="741" width="19" height="18" fill="#111"/><path d="M657 741v-2a4 4 0 0 1 9 0v2" fill="none" stroke="#111" stroke-width="1.500"/>
<rect x="656" y="745" width="5" height="5" fill="#f25022"/><rect x="662" y="745" width="5" height="5" fill="#7fba00"/><rect x="656" y="751" width="5" height="5" fill="#00a4ef"/><rect x="662" y="751" width="5" height="5" fill="#ffb900"/>
<rect x="699" y="743" width="24" height="17" fill="#1e9be0"/><path d="M699 743l12-6 12 6-12 9z" fill="#0d6eb5"/><path d="M699 743l12 9 12-9v-1h-24z" fill="#e6f4fb"/>
<rect x="738" y="728" width="45" height="40" fill="#e2edf2"/>
<rect x="750" y="737" width="21" height="21" rx="3" fill="#0b2a3e" stroke="#31a8ff" stroke-width="1.500"/>
<text x="754" y="752" font-size="12" font-weight="bold" fill="#41b4ff">Ps</text>
<rect x="547" y="765" width="40" height="3" fill="#0f78d4"/><rect x="596" y="765" width="40" height="3" fill="#0f78d4"/><rect x="740" y="765" width="43" height="3" fill="#0f78d4"/>
<!-- tray -->
<path d="M1129 751l6-6 6 6" fill="none" stroke="#222" stroke-width="1.300"/>
<path d="M1153 751q-2-4 2-5 1-4 5-4 3 0 4 3 4 0 4 4 0 2-2 3h-12z" fill="#dff0f7" stroke="#222" stroke-width="1.100"/><path d="M1153 748h14l1 2-2 2h-12z" fill="#888"/>
<path d="M1176 745h5M1176 750h5M1175 743v3M1178 743v3" stroke="#111"/><rect x="1180" y="743.500" width="10" height="7" fill="none" stroke="#111"/><rect x="1181.500" y="745" width="6" height="4" fill="#111"/>
<path d="M1202 754q0-8 10-11M1204.500 754q0-6 8-8M1207.500 754q0-3 5-5" fill="none" stroke="#555" stroke-width="1"/><circle cx="1211" cy="753" r="1.300" fill="#111"/>
<path d="M1224 746h3l4-3v12l-4-3h-3z" fill="none" stroke="#222"/><path d="M1234 746q1.500 3 0 6M1236.500 744q2.500 5 0 10" fill="none" stroke="#888"/>
<text x="1278" y="743" font-size="12" fill="#222" text-anchor="middle">21:12</text>
<text x="1278" y="761" font-size="12" fill="#222" text-anchor="middle">30/04/2020</text>
<path d="M1326 741h18v12h-14l-4 3z" fill="#111"/><path d="M1329 744h12M1329 747h12M1329 750h8" stroke="#ddd"/>
<circle cx="1341" cy="756" r="7.500" fill="#d8d8d8" stroke="#555"/>
<text x="1341" y="760" font-size="10.500" fill="#222" text-anchor="middle">5</text>
</svg>
</body></html>
